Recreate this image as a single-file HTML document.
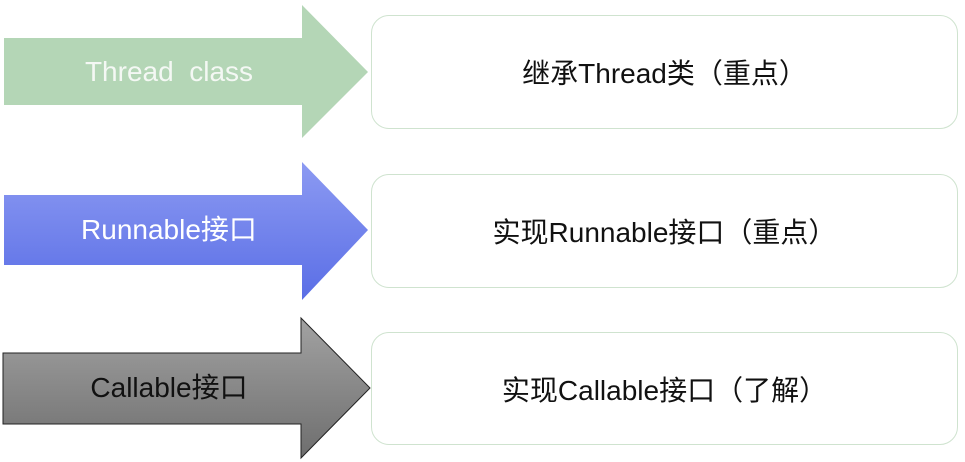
<!DOCTYPE html>
<html><head><meta charset="utf-8"><style>
body{margin:0;width:965px;height:462px;background:#fff;overflow:hidden;position:relative;font-family:"Liberation Sans","Noto Sans CJK SC",sans-serif}
.box{position:absolute;left:371px;width:587px;border:1.5px solid #cfe3cf;border-radius:18px;box-sizing:border-box;display:flex;align-items:center;justify-content:center;font-size:28px;color:#111}
.lbl{position:absolute;width:336px;left:4px;height:40px;line-height:40px;text-align:center;font-size:28px;margin-left:-3px}
</style></head><body>
<svg width="965" height="462" style="position:absolute;left:0;top:0">
<defs>
<linearGradient id="b" x1="0" y1="0" x2="0" y2="1"><stop offset="0" stop-color="#8c9af2"/><stop offset="1" stop-color="#5a6ee6"/></linearGradient>
<linearGradient id="g" x1="0" y1="0" x2="0" y2="1"><stop offset="0" stop-color="#a2a2a2"/><stop offset="1" stop-color="#6e6e6e"/></linearGradient>
</defs>
<polygon points="4,38 302,38 302,5 368,72 302,138 302,105 4,105" fill="#b4d6b6"/>
<polygon points="4,195 302,195 302,162 368,230 302,300 302,265 4,265" fill="url(#b)"/>
<polygon points="3,353 301,353 301,318 370,388 301,458 301,424 3,424" fill="url(#g)" stroke="#222" stroke-width="1"/>
</svg>
<div class="lbl" style="top:52px;color:#f4f8f4">Thread&nbsp; class</div>
<div class="lbl" style="top:210px;color:#fff">Runnable接口</div>
<div class="lbl" style="top:368px;color:#111">Callable接口</div>
<div class="box" style="top:15px;height:114px">继承Thread类（重点）</div>
<div class="box" style="top:174px;height:114px">实现Runnable接口（重点）</div>
<div class="box" style="top:332px;height:113px">实现Callable接口（了解）</div>
</body></html>
